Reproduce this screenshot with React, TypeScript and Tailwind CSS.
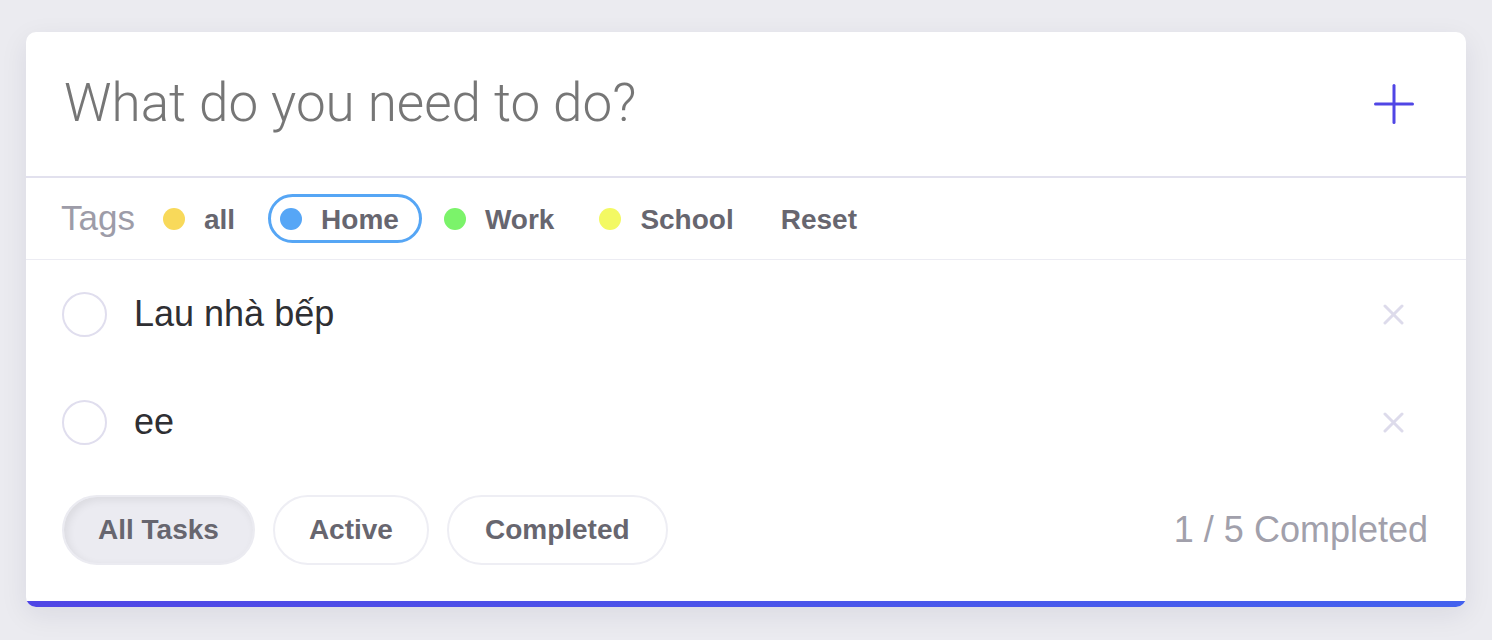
import React from "react";

const tags = [
  { name: "all", color: "bg-[#f8d95a]", active: false },
  { name: "Home", color: "bg-[#56a6f6]", active: true },
  { name: "Work", color: "bg-[#7bf36a]", active: false },
  { name: "School", color: "bg-[#f3f963]", active: false },
];

const todos = ["Lau nhà bếp", "ee"];

export default function App() {
  return (
    <div className="min-h-screen bg-[#ebebf0] px-[26px] pt-[32px] pb-[34px]" style={{ fontFamily: '"Liberation Sans", Arial, sans-serif' }}>
      <div className="bg-white rounded-[10px] overflow-hidden shadow-[0_8px_28px_rgba(30,30,60,0.08)]">
        {/* Header input */}
        <div className="h-[146px] flex items-center justify-between pl-[38px] pr-[52px] border-b-2 border-[#e2e1ee]">
          <input
            className="flex-1 outline-none bg-transparent text-[53px] font-light text-[#333] placeholder:text-[#767676]"
            style={{ fontFamily: 'Roboto, "Liberation Sans", sans-serif' }}
            placeholder="What do you need to do?"
          />
          <button className="w-[40px] h-[40px] flex items-center justify-center">
            <svg width="40" height="40" viewBox="0 0 40 40" fill="none" stroke="#5046e5" strokeWidth="3" strokeLinecap="round">
              <line x1="20" y1="1.5" x2="20" y2="38.5" />
              <line x1="1.5" y1="20" x2="38.5" y2="20" />
            </svg>
          </button>
        </div>

        {/* Tags */}
        <div className="h-[82px] flex items-center pl-[35px] border-b border-[#ececf3]">
          <span className="text-[35px] text-[#9d9ca8] mr-[16px]">Tags</span>
          <div className="flex items-center gap-[10px]">
            {tags.map((t) => (
              <button
                key={t.name}
                className={`flex items-center h-[49px] rounded-full border-[3px] pl-[9px] pr-[20px] gap-[19px] ${
                  t.active ? "border-[#56a6f5]" : "border-transparent"
                }`}
              >
                <span className={`w-[22px] h-[22px] rounded-full ${t.color}`} />
                <span className="text-[28px] font-bold text-[#67666f] pt-[2px]">{t.name}</span>
              </button>
            ))}
            <button className="flex items-center h-[49px] rounded-full border-[3px] border-transparent px-[11px]">
              <span className="text-[28px] font-bold text-[#67666f] pt-[2px]">Reset</span>
            </button>
          </div>
        </div>

        {/* Todos */}
        <div className="flex flex-col">
          {todos.map((t) => (
            <div key={t} className="h-[108px] flex items-center pl-[36px] pr-[62px]">
              <span className="w-[45px] h-[45px] rounded-full border-2 border-[#e0deee] shrink-0" />
              <span className="ml-[27px] flex-1 text-[36px] text-[#2f2f33]">{t}</span>
              <button className="w-[21px] h-[21px]">
                <svg width="21" height="21" viewBox="0 0 21 21" fill="none" stroke="#dddbeb" strokeWidth="3" strokeLinecap="round">
                  <line x1="2" y1="2" x2="19" y2="19" />
                  <line x1="19" y1="2" x2="2" y2="19" />
                </svg>
              </button>
            </div>
          ))}
        </div>

        {/* Footer */}
        <div className="flex items-center justify-between pl-[36px] pr-[38px] pt-[19px] pb-[36px]">
          <div className="flex items-center gap-[18px]">
            <button className="h-[70px] px-[34px] rounded-full border-2 border-[#ebebf1] bg-[#ebebf1] shadow-[inset_3px_3px_8px_rgba(0,0,0,0.07)] text-[28px] font-bold text-[#67666f]">
              All Tasks
            </button>
            <button className="h-[70px] px-[34px] rounded-full border-2 border-[#eeeef4] bg-white text-[28px] font-bold text-[#67666f]">
              Active
            </button>
            <button className="h-[70px] px-[36px] rounded-full border-2 border-[#eeeef4] bg-white text-[28px] font-bold text-[#67666f]">
              Completed
            </button>
          </div>
          <span className="text-[36px] text-[#a1a0ab]">1 / 5 Completed</span>
        </div>

        <div className="h-[6px] bg-gradient-to-r from-[#5046e5] to-[#4361ee]" />
      </div>
    </div>
  );
}
